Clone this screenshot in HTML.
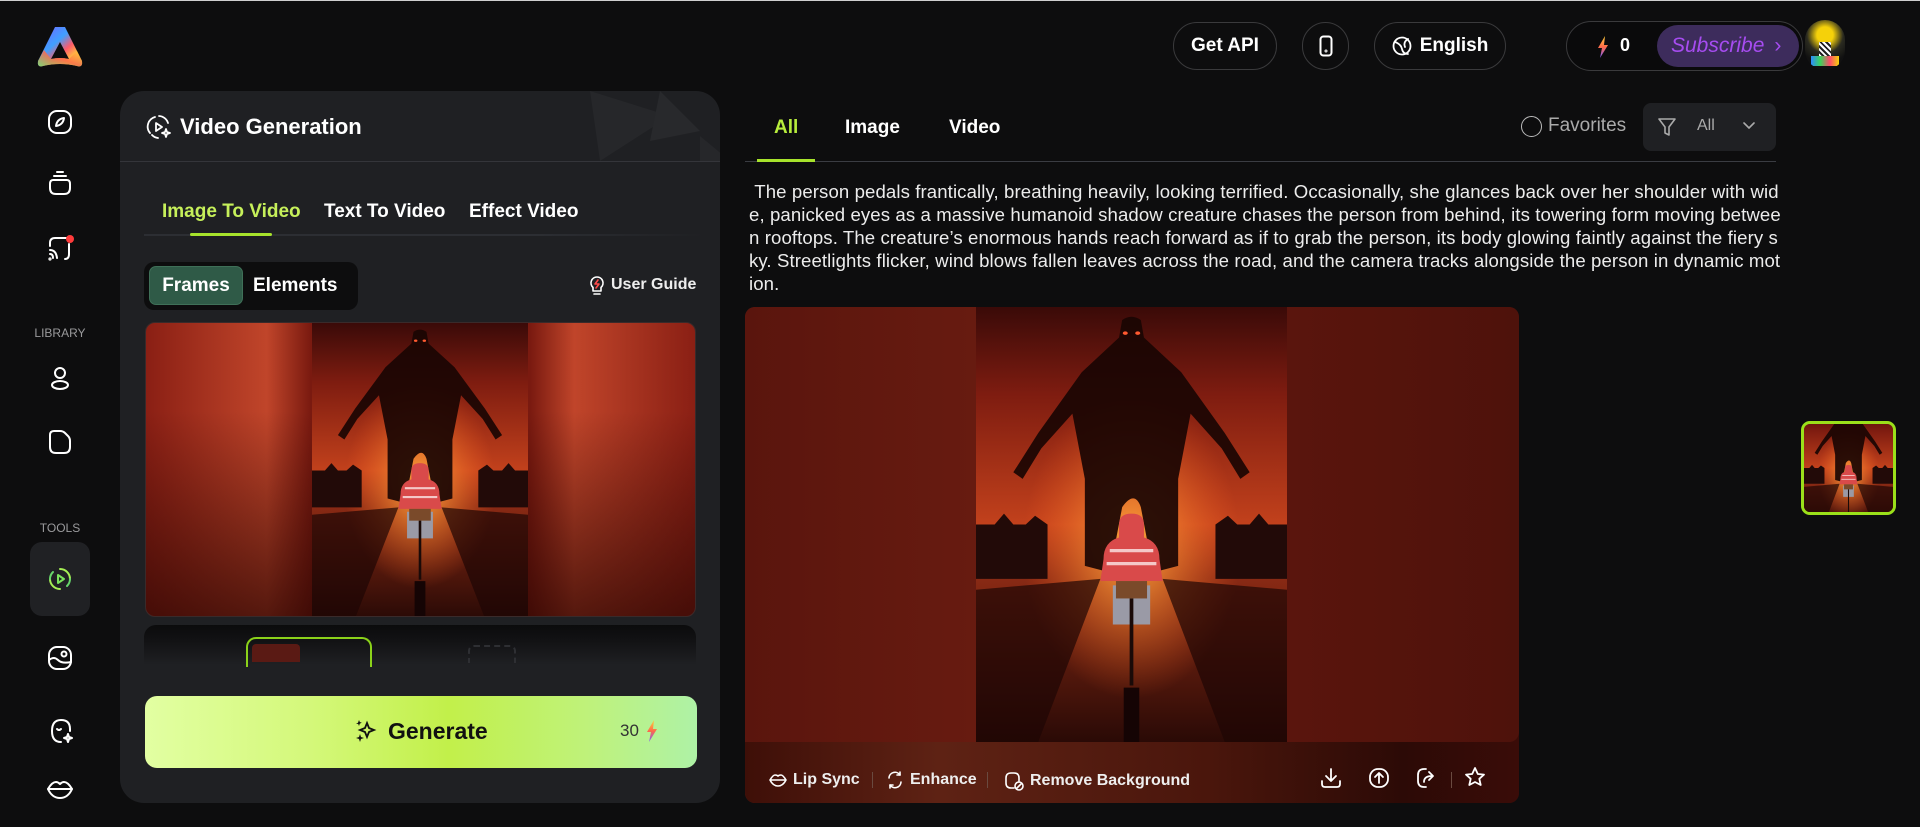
<!DOCTYPE html>
<html><head><meta charset="utf-8">
<style>
*{box-sizing:border-box;margin:0;padding:0}
body{width:1920px;height:827px;background:#0d0d0e;font-family:"Liberation Sans",sans-serif;color:#fff;position:relative;overflow:hidden}
.abs{position:absolute}
.ic{position:absolute;stroke:#fff;fill:none;stroke-width:2;stroke-linecap:round;stroke-linejoin:round}
.pill{position:absolute;border:1px solid #3a3a3c;border-radius:26px;display:flex;align-items:center;justify-content:center;font-weight:bold;font-size:19px}
.lbl{position:absolute;font-size:12px;color:#9a9a9c;width:120px;text-align:center;left:0}
.txt{position:absolute;left:749px;font-size:18.6px;color:#ececec;white-space:nowrap;letter-spacing:0.1px}
.tb{position:absolute;font-size:16px;font-weight:bold;color:#eee;display:flex;align-items:center;gap:6px;top:771px}
</style></head><body>
<div class="abs" style="left:0;top:0;width:1920px;height:1px;background:#cfcfcf"></div>

<!-- logo -->
<svg class="abs" style="left:36px;top:24px" width="48" height="48" viewBox="0 0 48 48">
<defs><linearGradient id="lg" x1="0" y1="0" x2="1" y2="1"><stop offset="0" stop-color="#7a5cff"/><stop offset=".4" stop-color="#3fa0ff"/><stop offset=".6" stop-color="#ff5a6a"/><stop offset=".8" stop-color="#ffd23a"/><stop offset="1" stop-color="#7ee06a"/></linearGradient>
<linearGradient id="lg2" x1="0" y1="1" x2="1" y2="0"><stop offset="0" stop-color="#7be36b"/><stop offset=".5" stop-color="#ff6a4a"/><stop offset="1" stop-color="#ffd23a"/></linearGradient></defs>
<path d="M19 3 L29 3 L46 37 Q47 44 41 42 Q24 38 7 42 Q1 44 2 37 Z M24 18 L15 35 Q24 33 33 35 Z" fill="url(#lg)" fill-rule="evenodd"/>
<path d="M2 37 Q1 44 7 42 Q24 38 41 42 Q47 44 46 37 L41 27 L33 35 Q24 33 15 35 L8 26 Z" fill="url(#lg2)" opacity=".85"/>
</svg>

<!-- sidebar icons -->
<svg class="ic" style="left:47px;top:109px" width="26" height="26" viewBox="0 0 26 26"><rect x="2" y="2" width="22" height="22" rx="8"/><path d="M9 17 Q10 10 17 9 Q16 16 9 17Z"/></svg>
<svg class="ic" style="left:47px;top:170px" width="26" height="26" viewBox="0 0 26 26"><path d="M10 2h6M7 6h12"/><path d="M6 10h14q3 0 3 4v4q0 6-6 6h-8q-6 0-6-6v-4q0-4 3-4z"/></svg>
<svg class="ic" style="left:47px;top:234px" width="28" height="28" viewBox="0 0 28 28"><path d="M3 12V9q0-5 5-5h11"/><path d="M22 10v10q0 5-4 5"/><path d="M3 16q6 0 7 8M3 20q3 0 3 4"/><circle cx="3" cy="25" r=".6"/><circle cx="23" cy="5" r="4" fill="#ff3b3b" stroke="none"/></svg>
<div class="lbl" style="top:326px">LIBRARY</div>
<svg class="ic" style="left:47px;top:365px" width="26" height="26" viewBox="0 0 26 26"><circle cx="13" cy="8" r="5"/><ellipse cx="13" cy="20" rx="8" ry="4"/></svg>
<svg class="ic" style="left:47px;top:428px" width="26" height="26" viewBox="0 0 26 26"><path d="M3 7q0-4 4-4h6q3 0 5 2l3 3q2 2 2 5v6q0 6-6 6h-8q-6 0-6-6z"/></svg>
<div class="lbl" style="top:521px">TOOLS</div>
<div class="abs" style="left:30px;top:542px;width:60px;height:74px;background:#202124;border-radius:12px"></div>
<svg class="ic" style="left:47px;top:566px;stroke:#8be04f" width="26" height="26" viewBox="0 0 26 26"><path d="M13 3a10 10 0 0 1 10 10M3 13a10 10 0 0 0 10 10" stroke="#a6ef55"/><path d="M6 6a10 10 0 0 0-3 7M20 20a10 10 0 0 0 3-7" stroke="#67d66a"/><path d="M11 9l6 4-6 4z" stroke="#7ae35c"/></svg>
<svg class="ic" style="left:47px;top:645px" width="26" height="26" viewBox="0 0 26 26"><rect x="2" y="2" width="22" height="22" rx="8"/><circle cx="17" cy="9" r="2.5"/><path d="M2 15q5-4 9 0t13 2"/></svg>
<svg class="ic" style="left:47px;top:717px" width="28" height="28" viewBox="0 0 28 28"><path d="M14 3q9 0 9 9v2M14 25q-9 0-9-11q0-11 9-11"/><path d="M10 12q2 2 4 0"/><path d="M21 17l1 3 3 1-3 1-1 3-1-3-3-1 3-1z"/></svg>
<svg class="ic" style="left:46px;top:779px" width="28" height="22" viewBox="0 0 28 22"><path d="M2 10q4-7 8-7q2 0 4 2q2-2 4-2q4 0 8 7q-4 9-12 9t-12-9z"/><path d="M2 10h24"/></svg>

<!-- left panel -->
<div class="abs" style="left:120px;top:91px;width:600px;height:712px;background:#1f2023;border-radius:24px;overflow:hidden">
  <svg class="abs" style="left:360px;top:0" width="240" height="71" viewBox="0 0 240 71"><path d="M110 0l80 25-70 45z" fill="#26272a"/><path d="M180 0l40 40-50 10z" fill="#28292c"/><path d="M220 45l30 25h-30z" fill="#26272a"/></svg>
  <div class="abs" style="left:0;top:70px;width:600px;height:1px;background:#34353a"></div>
</div>
<svg class="ic" style="left:146px;top:114px;stroke-width:1.8" width="26" height="26" viewBox="0 0 26 26"><path d="M13 2a10 10 0 0 1 9 7M4 19A10 10 0 0 1 9 3M12 24a10 10 0 0 1-6-3"/><path d="M10 9l6 4-6 4z"/><path d="M20 15l1 3 3 1-3 1-1 3-1-3-3-1 3-1z"/></svg>
<div class="abs" style="left:180px;top:114px;font-size:22px;font-weight:bold">Video Generation</div>

<div class="abs" style="left:162px;top:201px;font-size:19px;font-weight:bold;color:#c6f05a">Image To Video</div>
<div class="abs" style="left:324px;top:201px;font-size:19px;font-weight:bold">Text To Video</div>
<div class="abs" style="left:469px;top:201px;font-size:19px;font-weight:bold">Effect Video</div>
<div class="abs" style="left:144px;top:234px;width:560px;height:2px;background:linear-gradient(90deg,#2c2e33,#2c2e33 70%,transparent)"></div>
<div class="abs" style="left:190px;top:233px;width:82px;height:3px;background:#a7e32c;border-radius:2px"></div>

<div class="abs" style="left:144px;top:262px;width:214px;height:48px;background:#0d0d0e;border-radius:10px"></div>
<div class="abs" style="left:149px;top:266px;width:94px;height:39px;background:#2f5a47;border:1px solid #3f7058;border-radius:7px;font-size:19px;font-weight:bold;display:flex;align-items:center;justify-content:center">Frames</div>
<div class="abs" style="left:253px;top:275px;font-size:19px;font-weight:bold">Elements</div>
<svg class="ic" style="left:589px;top:275px;stroke-width:1.6" width="16" height="22" viewBox="0 0 16 22"><path d="M8 2a6 6 0 0 0-4 10.5V16h8v-3.5A6 6 0 0 0 8 2zM5 19h6"/><path d="M9 5l-3 4h4l-3 4" stroke="#ff4b4b"/></svg>
<div class="abs" style="left:611px;top:276px;font-size:16px;font-weight:bold;color:#eee">User Guide</div>

<div class="abs" style="left:145px;top:322px;width:551px;height:295px;border-radius:10px;overflow:hidden;border:1px solid #3a2a2a;background:linear-gradient(90deg,#8a1f14 0%,#c0452a 22%,#7a1a10 30%,#7a1a10 70%,#c0452a 78%,#8a1f14 100%)">
  <div class="abs" style="inset:0;background:linear-gradient(180deg,rgba(0,0,0,0) 30%,rgba(40,5,2,.7) 100%)"></div>
  <svg class="abs" style="left:166px;top:0" width="216" height="295" viewBox="0 0 100 200" preserveAspectRatio="none">
   <use href="#scene"/></svg>
</div>

<svg width="0" height="0" style="position:absolute"><defs>
<linearGradient id="sky" x1="0" y1="0" x2="0" y2="1"><stop offset="0" stop-color="#3a0a08"/><stop offset=".2" stop-color="#7e1c10"/><stop offset=".5" stop-color="#c2411c"/><stop offset=".62" stop-color="#8a2a14"/><stop offset="1" stop-color="#2a0a06"/></linearGradient>
<radialGradient id="glow" cx=".5" cy=".55" r=".35"><stop offset="0" stop-color="#ffb040" stop-opacity=".95"/><stop offset="1" stop-color="#ff6020" stop-opacity="0"/></radialGradient>
<g id="scene">
<rect width="100" height="200" fill="url(#sky)"/>
<rect width="100" height="200" fill="url(#glow)"/>
<path d="M0 130L40 125 20 200H0zM100 130L60 125 80 200H100z" fill="#1e0604" opacity=".7"/>
<path d="M0 100h6l3-5 3 5h4l3-4 4 4v25H0zM100 100h-6l-3-5-3 5h-4l-3-4-4 4v25H100z" fill="#220a08"/>
<path d="M47 6q3-3 6 0l1 8q6 8 12 16l14 28 8 18-3 3-6-14-10-16 -4 30 0 40-8 3-4-30q-2-8-6 0l-4 30-8-3 0-40-4-30-10 16-6 14-3-3 8-18 14-28q6-8 12-16z" fill="#1a0503" opacity=".92"/>
<circle cx="48" cy="12" r=".8" fill="#ff5a30"/><circle cx="52" cy="12" r=".8" fill="#ff5a30"/>
<path d="M50 95q-4 0-4 5v6q-5 2-5 10l-1 10h20l-1-10q0-8-5-10v-6q0-5-4-5z" fill="#d94a4a"/>
<path d="M43 112h14M42 118h16" stroke="#f4c8c8" stroke-width="1.5"/>
<path d="M44 128h12v18h-12z" fill="#9a9aa6"/>
<rect x="45" y="126" width="10" height="8" fill="#7a4a2a"/>
<path d="M50 134v40" stroke="#1a0a08" stroke-width="1.2"/>
<path d="M50 175v25" stroke="#150404" stroke-width="5"/>
</g></defs></svg>

<!-- thumb strip -->
<div class="abs" style="left:144px;top:625px;width:552px;height:40px;border-radius:12px 12px 0 0;background:linear-gradient(180deg,#0b0b0c 0%,#121214 40%,#1f2023 100%)"></div>
<div class="abs" style="left:246px;top:637px;width:126px;height:30px;border:2px solid #8bd21a;border-bottom:none;border-radius:10px 10px 0 0"></div>
<div class="abs" style="left:252px;top:644px;width:48px;height:18px;background:#5a1a14;border-radius:4px 4px 0 0"></div>
<div class="abs" style="left:468px;top:645px;width:48px;height:18px;border:2px dashed #2e2f33;border-bottom:none;border-radius:6px 6px 0 0"></div>

<!-- generate -->
<div class="abs" style="left:145px;top:696px;width:552px;height:72px;border-radius:12px;background:linear-gradient(90deg,#e2ffa2 0%,#d4f87a 30%,#c2f04a 55%,#bff27a 80%,#aef2a6 100%)"></div>
<svg class="abs" style="left:355px;top:719px" width="22" height="24" viewBox="0 0 22 24"><path d="M12 4l2 5 5 2-5 2-2 5-2-5-5-2 5-2z" fill="none" stroke="#111" stroke-width="1.8"/><path d="M5 15l1 3 3 1-3 1-1 3-1-3-3-1 3-1z" fill="#111"/><path d="M4 1l.8 2 2 .8-2 .8L4 7l-.8-2L1 4.6l2-.8z" fill="#111"/></svg>
<div class="abs" style="left:388px;top:718px;font-size:23px;font-weight:bold;color:#111">Generate</div>
<div class="abs" style="left:620px;top:721px;font-size:17px;color:#333">30</div>
<svg class="abs" style="left:646px;top:720px" width="12" height="22" viewBox="0 0 12 22"><defs><linearGradient id="bolt" x1="0" y1="0" x2="0" y2="1"><stop offset="0" stop-color="#ffd23a"/><stop offset=".5" stop-color="#ff6a4a"/><stop offset="1" stop-color="#7a5cff"/></linearGradient></defs><path d="M8 0L1 12h4l-2 10 8-13H7z" fill="url(#bolt)"/></svg>

<!-- top bar -->
<div class="pill" style="left:1173px;top:22px;width:104px;height:48px">Get API</div>
<div class="pill" style="left:1302px;top:22px;width:47px;height:48px"><svg class="ic" style="position:static" width="14" height="22" viewBox="0 0 14 22"><rect x="1.5" y="1.5" width="11" height="19" rx="3"/><circle cx="7" cy="16" r=".5"/></svg></div>
<div class="pill" style="left:1374px;top:22px;width:132px;height:48px;gap:8px"><svg class="ic" style="position:static;stroke-width:1.8" width="20" height="20" viewBox="0 0 20 20"><circle cx="10" cy="10" r="8.5"/><path d="M3 6q6 2 7 7t6 5M16 3q-5 3-3 8"/></svg>English</div>
<div class="abs" style="left:1566px;top:21px;width:237px;height:50px;border:1px solid #3a3a3c;border-radius:26px;background:#0a0a0b"></div>
<svg class="abs" style="left:1597px;top:36px" width="12" height="22" viewBox="0 0 12 22"><path d="M8 0L1 12h4l-2 10 8-13H7z" fill="url(#bolt)"/></svg>
<div class="abs" style="left:1620px;top:35px;font-size:18px;font-weight:bold">0</div>
<div class="abs" style="left:1657px;top:25px;width:142px;height:42px;border-radius:22px;background:#3d2c5c;color:#a64cf0;font-size:21px;font-style:italic;display:flex;align-items:center;padding-left:14px">Subscribe<span style="font-style:normal;margin-left:10px">›</span></div>
<div class="abs" style="left:1805px;top:20px;width:40px;height:50px;border-radius:20px;background:radial-gradient(circle at 50% 30%,#f5d10a 0 20%,#2a2a20 45%,#111 70%);overflow:hidden">
 <div class="abs" style="left:14px;top:22px;width:12px;height:14px;background:repeating-linear-gradient(45deg,#fff 0 2px,#222 2px 4px)"></div>
 <div class="abs" style="left:6px;top:36px;width:28px;height:10px;background:linear-gradient(90deg,#2b8cff,#3cd35a,#ff4b6a,#f5d10a)"></div></div>

<!-- right tabs -->
<div class="abs" style="left:774px;top:117px;font-size:19px;font-weight:bold;color:#b7ec3c">All</div>
<div class="abs" style="left:845px;top:117px;font-size:19px;font-weight:bold">Image</div>
<div class="abs" style="left:949px;top:117px;font-size:19px;font-weight:bold">Video</div>
<div class="abs" style="left:745px;top:161px;width:1031px;height:1px;background:#3a3c42"></div>
<div class="abs" style="left:757px;top:159px;width:58px;height:3px;background:#a7e32c"></div>
<div class="abs" style="left:1521px;top:116px;width:21px;height:21px;border:1.5px solid #bbb;border-radius:50%"></div>
<div class="abs" style="left:1548px;top:115px;font-size:19px;color:#aaa">Favorites</div>
<div class="abs" style="left:1643px;top:103px;width:133px;height:48px;background:#1f2023;border-radius:8px"></div>
<svg class="ic" style="left:1658px;top:117px;stroke:#aaa;stroke-width:1.6" width="18" height="20" viewBox="0 0 18 20"><path d="M1 2h16l-6 8v8l-4-2v-6z"/></svg>
<div class="abs" style="left:1697px;top:117px;font-size:16px;color:#aaa">All</div>
<svg class="ic" style="left:1742px;top:121px;stroke:#aaa;stroke-width:1.6" width="14" height="10" viewBox="0 0 14 10"><path d="M2 2l5 5 5-5"/></svg>

<!-- prompt text -->
<div class="txt" style="top:181px">&nbsp;The person pedals frantically, breathing heavily, looking terrified. Occasionally, she glances back over her shoulder with wid</div>
<div class="txt" style="top:204px">e, panicked eyes as a massive humanoid shadow creature chases the person from behind, its towering form moving betwee</div>
<div class="txt" style="top:227px">n rooftops. The creature’s enormous hands reach forward as if to grab the person, its body glowing faintly against the fiery s</div>
<div class="txt" style="top:250px">ky. Streetlights flicker, wind blows fallen leaves across the road, and the camera tracks alongside the person in dynamic mot</div>
<div class="txt" style="top:273px">ion.</div>

<!-- video -->
<div class="abs" style="left:745px;top:307px;width:774px;height:496px;border-radius:10px;overflow:hidden;background:linear-gradient(90deg,#5a160e 0%,#6a1c12 30%,#4a120b 60%,#5e180f 80%,#3a0c08 100%)">
  <div class="abs" style="left:0;top:435px;width:774px;height:61px;background:linear-gradient(90deg,#3e0f08 0%,#5e2214 25%,#4a160c 60%,#2c0a06 85%,#3a0c08 100%)"></div>
  <div class="abs" style="left:0;top:0;width:774px;height:435px;border-radius:0 0 10px 10px;background:linear-gradient(90deg,#5a150d,#6e1e12 45%,#5a150d 70%,#4e120b)"></div>
  <svg class="abs" style="left:231px;top:0" width="311" height="435" viewBox="0 0 100 200" preserveAspectRatio="none"><use href="#scene"/></svg>
</div>
<div class="tb" style="left:769px"><svg class="ic" style="position:static;stroke-width:1.6" width="18" height="14" viewBox="0 0 18 14"><path d="M1 7q3-5 5-5q2 0 3 1q1-1 3-1q2 0 5 5q-3 6-8 6t-8-6zM1 7h16"/></svg>Lip Sync</div>
<div class="abs" style="left:872px;top:772px;width:1px;height:16px;background:#6a4a40"></div>
<div class="tb" style="left:886px"><svg class="ic" style="position:static;stroke-width:1.6" width="18" height="18" viewBox="0 0 18 18"><path d="M3 7a6 6 0 0 1 11-3M15 11a6 6 0 0 1-11 3"/><path d="M14 1v3h-3M4 17v-3h3"/></svg>Enhance</div>
<div class="abs" style="left:987px;top:772px;width:1px;height:16px;background:#6a4a40"></div>
<div class="tb" style="left:1004px"><svg class="ic" style="position:static;stroke-width:1.6" width="20" height="20" viewBox="0 0 20 20"><path d="M10 17H7q-5 0-5-5V7q0-5 5-5h3q5 0 5 5v3"/><circle cx="15" cy="15" r="4"/><path d="M13 17l4-4"/></svg>Remove Background</div>
<svg class="ic" style="left:1320px;top:767px;stroke-width:1.8" width="22" height="22" viewBox="0 0 22 22"><path d="M11 2v12M6 9l5 5 5-5M2 14v3q0 3 3 3h12q3 0 3-3v-3"/></svg>
<svg class="ic" style="left:1368px;top:767px;stroke-width:1.8" width="22" height="22" viewBox="0 0 22 22"><rect x="2" y="2" width="18" height="18" rx="8"/><path d="M11 16V7M7 10l4-4 4 4"/></svg>
<svg class="ic" style="left:1416px;top:767px;stroke-width:1.8" width="22" height="22" viewBox="0 0 22 22"><path d="M10 20H8q-6 0-6-6V8q0-6 6-6h2"/><path d="M8 15q0-6 8-6M13 5l4 4-4 4"/></svg>
<div class="abs" style="left:1451px;top:772px;width:1px;height:16px;background:#6a4a40"></div>
<svg class="ic" style="left:1464px;top:766px;stroke-width:1.8" width="22" height="22" viewBox="0 0 22 22"><path d="M11 2l2.8 6 6.2.6-4.7 4.2 1.4 6.2L11 16l-5.7 3 1.4-6.2L2 8.6 8.2 8z"/></svg>

<!-- right thumb -->
<div class="abs" style="left:1801px;top:421px;width:95px;height:94px;border:3px solid #9be01a;border-radius:9px;overflow:hidden;background:#6a1c12">
<svg class="abs" style="left:0;top:0" width="89" height="88" viewBox="0 30 100 140" preserveAspectRatio="none"><use href="#scene"/></svg></div>
</body></html>
